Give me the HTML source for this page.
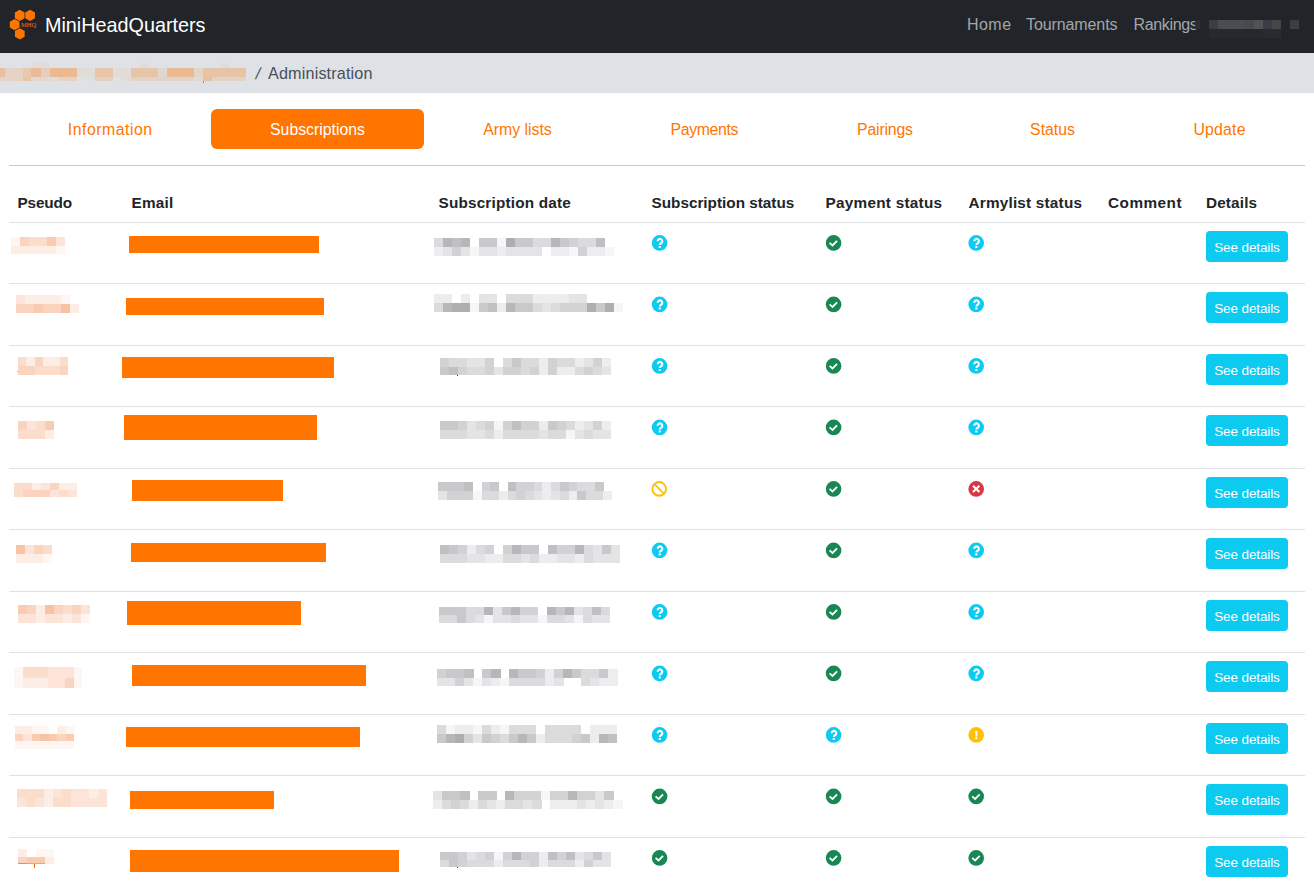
<!DOCTYPE html>
<html><head><meta charset="utf-8"><style>
*{box-sizing:border-box;margin:0;padding:0}
html,body{width:1314px;height:892px;overflow:hidden;background:#fff;font-family:"Liberation Sans",sans-serif;color:#212529;position:relative}
.nav{position:absolute;left:0;top:0;width:1314px;height:53px;background:#212529}
.logo{position:absolute;left:0;top:0}
.brand{position:absolute;left:45px;top:14px;font-size:19.8px;line-height:22px;color:#fff;white-space:nowrap}
.nl{position:absolute;top:15.8px;font-size:16px;line-height:18px;color:#a4a6a9;white-space:nowrap}
.crumb{position:absolute;left:0;top:53px;width:1314px;height:40px;background:#dee2e6}
.ct{position:absolute;top:64px;font-size:16.2px;line-height:18px;color:#495057;white-space:nowrap}
.tab{position:absolute;top:109px;height:39.5px;line-height:42.5px;text-align:center;font-size:15.8px;color:#ff7500;white-space:nowrap;border-radius:6px}
.tab.act{background:#ff7500;color:#fff}
.tl{position:absolute;left:9px;top:164.5px;width:1296px;height:1px;background:#c9cacc}
.th{position:absolute;top:194px;font-size:15.3px;line-height:18px;font-weight:bold;white-space:nowrap;color:#212529}
.hl{position:absolute;left:9px;width:1296px;height:1px;background:#dee2e6}
.em{position:absolute;background:#ff7500}
.bk{position:absolute}
.ic{position:absolute}
.btn{position:absolute;left:1206px;width:82px;height:31px;line-height:34.5px;background:#0dcaf0;color:#fff;border-radius:4px;text-align:center;font-size:13.5px;letter-spacing:-0.12px;text-indent:-0.12px;white-space:nowrap}
</style></head><body>
<div class="nav"><svg class="logo" width="45" height="53" viewBox="0 0 45 53"><polygon points="19.70,9.80 24.55,12.60 24.55,18.20 19.70,21.00 14.85,18.20 14.85,12.60" fill="#ff7500"/><polygon points="30.10,9.80 34.95,12.60 34.95,18.20 30.10,21.00 25.25,18.20 25.25,12.60" fill="#ff7500"/><polygon points="14.60,19.00 19.45,21.80 19.45,27.40 14.60,30.20 9.75,27.40 9.75,21.80" fill="#ff7500"/><polygon points="19.80,28.30 24.65,31.10 24.65,36.70 19.80,39.50 14.95,36.70 14.95,31.10" fill="#ff7500"/><text x="21" y="26.7" font-family="Liberation Serif" font-size="6.5" fill="#ff7500" textLength="15.2" lengthAdjust="spacingAndGlyphs">MHQ</text></svg><div class="brand">MiniHeadQuarters</div>
<div class="nl" style="left:967px;letter-spacing:0.45px">Home</div><div class="nl" style="left:1026px;letter-spacing:-0.1px">Tournaments</div><div class="nl" style="left:1133.5px;letter-spacing:-0.35px">Rankings</div>
<div class="bk" style="left:1195.2px;top:20px;width:4.9px;height:9px;background:#2d2e30"></div><div class="bk" style="left:1208.9px;top:20px;width:9.2px;height:9px;background:#3b3e45"></div><div class="bk" style="left:1217.8px;top:20px;width:9.2px;height:9px;background:#4b4e50"></div><div class="bk" style="left:1226.8px;top:20px;width:9.2px;height:9px;background:#4a4d4f"></div><div class="bk" style="left:1235.8px;top:20px;width:9.2px;height:9px;background:#4c4d51"></div><div class="bk" style="left:1244.7px;top:20px;width:9.6px;height:9px;background:#464c4b"></div><div class="bk" style="left:1254.2px;top:20px;width:9.2px;height:9px;background:#515457"></div><div class="bk" style="left:1263.1px;top:20px;width:9.2px;height:9px;background:#3b3e46"></div><div class="bk" style="left:1272.1px;top:20px;width:9.0px;height:9px;background:#454647"></div><div class="bk" style="left:1290.0px;top:20px;width:9.2px;height:9px;background:#3b3e42"></div><div class="bk" style="left:1208.9px;top:29px;width:36.0px;height:9px;background:#26292d"></div><div class="bk" style="left:1244.7px;top:29px;width:18.6px;height:9px;background:#25292c"></div><div class="bk" style="left:1263.1px;top:29px;width:17.9px;height:9px;background:#282b2f"></div>
</div>
<div class="crumb"></div>
<div class="bk" style="left:32.3px;top:63px;width:17.7px;height:5px;background:#e1dcd8"></div><div class="bk" style="left:140.4px;top:63px;width:8.2px;height:5px;background:#e0dcd9"></div><div class="bk" style="left:220.7px;top:63px;width:9.3px;height:5px;background:#e0dcd9"></div><div class="bk" style="left:0.0px;top:68px;width:5.0px;height:9px;background:#e8bfa0"></div><div class="bk" style="left:4.8px;top:68px;width:18.3px;height:9px;background:#e4d2c4"></div><div class="bk" style="left:22.8px;top:68px;width:8.8px;height:9px;background:#e6c9af"></div><div class="bk" style="left:31.4px;top:68px;width:9.7px;height:9px;background:#e9bb98"></div><div class="bk" style="left:40.9px;top:68px;width:9.1px;height:9px;background:#e4cfbe"></div><div class="bk" style="left:49.8px;top:68px;width:27.4px;height:9px;background:#ebb992"></div><div class="bk" style="left:77.1px;top:68px;width:18.3px;height:9px;background:#e0ddd9"></div><div class="bk" style="left:95.1px;top:68px;width:18.3px;height:9px;background:#e7c5a9"></div><div class="bk" style="left:113.2px;top:68px;width:18.3px;height:9px;background:#e0ddd9"></div><div class="bk" style="left:131.3px;top:68px;width:26.8px;height:9px;background:#e7c5a9"></div><div class="bk" style="left:157.9px;top:68px;width:8.8px;height:9px;background:#e0d8d0"></div><div class="bk" style="left:166.5px;top:68px;width:27.8px;height:9px;background:#ebb992"></div><div class="bk" style="left:194.1px;top:68px;width:8.8px;height:9px;background:#e4d4c6"></div><div class="bk" style="left:202.6px;top:68px;width:36.3px;height:9px;background:#e8c4a6"></div><div class="bk" style="left:238.8px;top:68px;width:7.4px;height:9px;background:#eac3a3"></div><div class="bk" style="left:0.0px;top:77px;width:31.6px;height:4px;background:#e5d3c3"></div><div class="bk" style="left:22.8px;top:77px;width:8.8px;height:4px;background:#e8c4a4"></div><div class="bk" style="left:31.4px;top:77px;width:18.7px;height:4px;background:#e2d8d0"></div><div class="bk" style="left:49.8px;top:77px;width:9.3px;height:4px;background:#e0dcd8"></div><div class="bk" style="left:59.0px;top:77px;width:18.3px;height:4px;background:#e5d2c2"></div><div class="bk" style="left:77.1px;top:77px;width:18.3px;height:4px;background:#dfe0e1"></div><div class="bk" style="left:95.1px;top:77px;width:18.3px;height:4px;background:#e6cfbc"></div><div class="bk" style="left:121.8px;top:77px;width:9.7px;height:4px;background:#e1dcd7"></div><div class="bk" style="left:131.3px;top:77px;width:63.0px;height:4px;background:#e4d3c5"></div><div class="bk" style="left:194.1px;top:77px;width:8.8px;height:4px;background:#e1dbd6"></div><div class="bk" style="left:202.6px;top:77px;width:9.7px;height:4px;background:#e9bf9e"></div><div class="bk" style="left:212.1px;top:77px;width:34.1px;height:4px;background:#e4d3c5"></div>
<div class="ct" style="left:254px;transform:skewX(-12deg);transform-origin:0 100%">/</div><div class="ct" style="left:268px;letter-spacing:0.15px">Administration</div>
<div class="tab" style="left:9px;width:202px;letter-spacing:0.53px;text-indent:0.53px">Information</div><div class="tab act" style="left:211px;width:213px;letter-spacing:0px;text-indent:0px">Subscriptions</div><div class="tab" style="left:424px;width:187px;letter-spacing:0px;text-indent:0px">Army lists</div><div class="tab" style="left:611px;width:187px;letter-spacing:-0.34px;text-indent:-0.34px">Payments</div><div class="tab" style="left:798px;width:174px;letter-spacing:-0.18px;text-indent:-0.18px">Pairings</div><div class="tab" style="left:972px;width:161px;letter-spacing:0px;text-indent:0px">Status</div><div class="tab" style="left:1134.5px;width:170px;letter-spacing:0.2px;text-indent:0.2px">Update</div>
<div class="tl"></div>
<div class="th" style="left:17.5px;letter-spacing:-0.15px">Pseudo</div>
<div class="th" style="left:131.5px;letter-spacing:0.25px">Email</div>
<div class="th" style="left:438.5px;letter-spacing:0.19px">Subscription date</div>
<div class="th" style="left:651.5px">Subscription status</div>
<div class="th" style="left:825.5px;letter-spacing:0.27px">Payment status</div>
<div class="th" style="left:968.5px;letter-spacing:0.21px">Armylist status</div>
<div class="th" style="left:1108px;letter-spacing:0.5px">Comment</div>
<div class="th" style="left:1206px;letter-spacing:0.15px">Details</div>
<div class="hl" style="top:222px"></div>
<div class="em" style="left:129px;top:236px;width:190px;height:17px"></div>
<div class="bk" style="left:11.00px;top:237.00px;width:9.25px;height:8.75px;background:rgb(254,246,242)"></div><div class="bk" style="left:20.00px;top:237.00px;width:9.25px;height:8.75px;background:rgb(250,212,190)"></div><div class="bk" style="left:29.00px;top:237.00px;width:9.25px;height:8.75px;background:rgb(251,221,203)"></div><div class="bk" style="left:38.00px;top:237.00px;width:9.25px;height:8.75px;background:rgb(251,221,203)"></div><div class="bk" style="left:47.00px;top:237.00px;width:9.25px;height:8.75px;background:rgb(249,204,177)"></div><div class="bk" style="left:56.00px;top:237.00px;width:9.25px;height:8.75px;background:rgb(252,229,216)"></div><div class="bk" style="left:11.00px;top:245.50px;width:9.25px;height:8.75px;background:rgb(253,238,229)"></div><div class="bk" style="left:20.00px;top:245.50px;width:9.25px;height:8.75px;background:rgb(253,238,229)"></div><div class="bk" style="left:29.00px;top:245.50px;width:9.25px;height:8.75px;background:rgb(253,238,229)"></div><div class="bk" style="left:38.00px;top:245.50px;width:9.25px;height:8.75px;background:rgb(253,238,229)"></div><div class="bk" style="left:47.00px;top:245.50px;width:9.25px;height:8.75px;background:rgb(253,238,229)"></div><div class="bk" style="left:56.00px;top:245.50px;width:9.25px;height:8.75px;background:rgb(254,246,242)"></div>
<div class="bk" style="left:434.00px;top:238.00px;width:9.25px;height:9.25px;background:rgb(219,219,221)"></div><div class="bk" style="left:443.00px;top:238.00px;width:9.25px;height:9.25px;background:rgb(183,183,185)"></div><div class="bk" style="left:452.00px;top:238.00px;width:9.25px;height:9.25px;background:rgb(192,192,194)"></div><div class="bk" style="left:461.00px;top:238.00px;width:9.25px;height:9.25px;background:rgb(183,183,185)"></div><div class="bk" style="left:479.00px;top:238.00px;width:9.25px;height:9.25px;background:rgb(201,201,203)"></div><div class="bk" style="left:488.00px;top:238.00px;width:9.25px;height:9.25px;background:rgb(201,201,203)"></div><div class="bk" style="left:497.00px;top:238.00px;width:9.25px;height:9.25px;background:rgb(246,246,248)"></div><div class="bk" style="left:506.00px;top:238.00px;width:9.25px;height:9.25px;background:rgb(174,174,176)"></div><div class="bk" style="left:515.00px;top:238.00px;width:9.25px;height:9.25px;background:rgb(201,201,203)"></div><div class="bk" style="left:524.00px;top:238.00px;width:9.25px;height:9.25px;background:rgb(201,201,203)"></div><div class="bk" style="left:533.00px;top:238.00px;width:9.25px;height:9.25px;background:rgb(219,219,221)"></div><div class="bk" style="left:542.00px;top:238.00px;width:9.25px;height:9.25px;background:rgb(219,219,221)"></div><div class="bk" style="left:551.00px;top:238.00px;width:9.25px;height:9.25px;background:rgb(183,183,185)"></div><div class="bk" style="left:560.00px;top:238.00px;width:9.25px;height:9.25px;background:rgb(201,201,203)"></div><div class="bk" style="left:569.00px;top:238.00px;width:9.25px;height:9.25px;background:rgb(210,210,212)"></div><div class="bk" style="left:578.00px;top:238.00px;width:9.25px;height:9.25px;background:rgb(219,219,221)"></div><div class="bk" style="left:587.00px;top:238.00px;width:9.25px;height:9.25px;background:rgb(219,219,221)"></div><div class="bk" style="left:596.00px;top:238.00px;width:9.25px;height:9.25px;background:rgb(192,192,194)"></div><div class="bk" style="left:434.00px;top:247.00px;width:9.25px;height:9.25px;background:rgb(237,237,239)"></div><div class="bk" style="left:443.00px;top:247.00px;width:9.25px;height:9.25px;background:rgb(228,228,230)"></div><div class="bk" style="left:452.00px;top:247.00px;width:9.25px;height:9.25px;background:rgb(210,210,212)"></div><div class="bk" style="left:461.00px;top:247.00px;width:9.25px;height:9.25px;background:rgb(228,228,230)"></div><div class="bk" style="left:470.00px;top:247.00px;width:9.25px;height:9.25px;background:rgb(246,246,248)"></div><div class="bk" style="left:479.00px;top:247.00px;width:9.25px;height:9.25px;background:rgb(228,228,230)"></div><div class="bk" style="left:488.00px;top:247.00px;width:9.25px;height:9.25px;background:rgb(228,228,230)"></div><div class="bk" style="left:497.00px;top:247.00px;width:9.25px;height:9.25px;background:rgb(237,237,239)"></div><div class="bk" style="left:506.00px;top:247.00px;width:9.25px;height:9.25px;background:rgb(228,228,230)"></div><div class="bk" style="left:515.00px;top:247.00px;width:9.25px;height:9.25px;background:rgb(228,228,230)"></div><div class="bk" style="left:524.00px;top:247.00px;width:9.25px;height:9.25px;background:rgb(228,228,230)"></div><div class="bk" style="left:533.00px;top:247.00px;width:9.25px;height:9.25px;background:rgb(228,228,230)"></div><div class="bk" style="left:551.00px;top:247.00px;width:9.25px;height:9.25px;background:rgb(237,237,239)"></div><div class="bk" style="left:560.00px;top:247.00px;width:9.25px;height:9.25px;background:rgb(237,237,239)"></div><div class="bk" style="left:569.00px;top:247.00px;width:9.25px;height:9.25px;background:rgb(246,246,248)"></div><div class="bk" style="left:578.00px;top:247.00px;width:9.25px;height:9.25px;background:rgb(210,210,212)"></div><div class="bk" style="left:587.00px;top:247.00px;width:9.25px;height:9.25px;background:rgb(237,237,239)"></div><div class="bk" style="left:596.00px;top:247.00px;width:9.25px;height:9.25px;background:rgb(237,237,239)"></div><div class="bk" style="left:605.00px;top:247.00px;width:9.25px;height:9.25px;background:rgb(246,246,248)"></div>
<div class="btn" style="top:231px">See details</div>
<div class="hl" style="top:283px"></div>
<div class="em" style="left:126px;top:298px;width:198px;height:17px"></div>
<div class="bk" style="left:16.00px;top:295.00px;width:9.25px;height:9.25px;background:rgb(252,229,216)"></div><div class="bk" style="left:25.00px;top:295.00px;width:9.25px;height:9.25px;background:rgb(253,238,229)"></div><div class="bk" style="left:34.00px;top:295.00px;width:9.25px;height:9.25px;background:rgb(253,238,229)"></div><div class="bk" style="left:43.00px;top:295.00px;width:9.25px;height:9.25px;background:rgb(253,238,229)"></div><div class="bk" style="left:52.00px;top:295.00px;width:9.25px;height:9.25px;background:rgb(253,238,229)"></div><div class="bk" style="left:61.00px;top:295.00px;width:9.25px;height:9.25px;background:rgb(254,246,242)"></div><div class="bk" style="left:16.00px;top:304.00px;width:9.25px;height:9.25px;background:rgb(250,212,190)"></div><div class="bk" style="left:25.00px;top:304.00px;width:9.25px;height:9.25px;background:rgb(250,212,190)"></div><div class="bk" style="left:34.00px;top:304.00px;width:9.25px;height:9.25px;background:rgb(249,204,177)"></div><div class="bk" style="left:43.00px;top:304.00px;width:9.25px;height:9.25px;background:rgb(250,212,190)"></div><div class="bk" style="left:52.00px;top:304.00px;width:9.25px;height:9.25px;background:rgb(250,212,190)"></div><div class="bk" style="left:61.00px;top:304.00px;width:9.25px;height:9.25px;background:rgb(248,195,164)"></div><div class="bk" style="left:70.00px;top:304.00px;width:9.25px;height:9.25px;background:rgb(253,238,229)"></div>
<div class="bk" style="left:434.00px;top:294.00px;width:9.25px;height:9.25px;background:rgb(237,237,239)"></div><div class="bk" style="left:443.00px;top:294.00px;width:9.25px;height:9.25px;background:rgb(237,237,239)"></div><div class="bk" style="left:461.00px;top:294.00px;width:9.25px;height:9.25px;background:rgb(237,237,239)"></div><div class="bk" style="left:479.00px;top:294.00px;width:9.25px;height:9.25px;background:rgb(228,228,230)"></div><div class="bk" style="left:488.00px;top:294.00px;width:9.25px;height:9.25px;background:rgb(228,228,230)"></div><div class="bk" style="left:506.00px;top:294.00px;width:9.25px;height:9.25px;background:rgb(219,219,221)"></div><div class="bk" style="left:515.00px;top:294.00px;width:9.25px;height:9.25px;background:rgb(219,219,221)"></div><div class="bk" style="left:524.00px;top:294.00px;width:9.25px;height:9.25px;background:rgb(219,219,221)"></div><div class="bk" style="left:533.00px;top:294.00px;width:9.25px;height:9.25px;background:rgb(237,237,239)"></div><div class="bk" style="left:542.00px;top:294.00px;width:9.25px;height:9.25px;background:rgb(237,237,239)"></div><div class="bk" style="left:551.00px;top:294.00px;width:9.25px;height:9.25px;background:rgb(237,237,239)"></div><div class="bk" style="left:560.00px;top:294.00px;width:9.25px;height:9.25px;background:rgb(237,237,239)"></div><div class="bk" style="left:569.00px;top:294.00px;width:9.25px;height:9.25px;background:rgb(228,228,230)"></div><div class="bk" style="left:578.00px;top:294.00px;width:9.25px;height:9.25px;background:rgb(228,228,230)"></div><div class="bk" style="left:434.00px;top:303.00px;width:9.25px;height:9.25px;background:rgb(219,219,221)"></div><div class="bk" style="left:443.00px;top:303.00px;width:9.25px;height:9.25px;background:rgb(183,183,185)"></div><div class="bk" style="left:452.00px;top:303.00px;width:9.25px;height:9.25px;background:rgb(174,174,176)"></div><div class="bk" style="left:461.00px;top:303.00px;width:9.25px;height:9.25px;background:rgb(174,174,176)"></div><div class="bk" style="left:470.00px;top:303.00px;width:9.25px;height:9.25px;background:rgb(246,246,248)"></div><div class="bk" style="left:479.00px;top:303.00px;width:9.25px;height:9.25px;background:rgb(201,201,203)"></div><div class="bk" style="left:488.00px;top:303.00px;width:9.25px;height:9.25px;background:rgb(192,192,194)"></div><div class="bk" style="left:497.00px;top:303.00px;width:9.25px;height:9.25px;background:rgb(237,237,239)"></div><div class="bk" style="left:506.00px;top:303.00px;width:9.25px;height:9.25px;background:rgb(183,183,185)"></div><div class="bk" style="left:515.00px;top:303.00px;width:9.25px;height:9.25px;background:rgb(201,201,203)"></div><div class="bk" style="left:524.00px;top:303.00px;width:9.25px;height:9.25px;background:rgb(201,201,203)"></div><div class="bk" style="left:533.00px;top:303.00px;width:9.25px;height:9.25px;background:rgb(219,219,221)"></div><div class="bk" style="left:542.00px;top:303.00px;width:9.25px;height:9.25px;background:rgb(228,228,230)"></div><div class="bk" style="left:551.00px;top:303.00px;width:9.25px;height:9.25px;background:rgb(219,219,221)"></div><div class="bk" style="left:560.00px;top:303.00px;width:9.25px;height:9.25px;background:rgb(210,210,212)"></div><div class="bk" style="left:569.00px;top:303.00px;width:9.25px;height:9.25px;background:rgb(210,210,212)"></div><div class="bk" style="left:578.00px;top:303.00px;width:9.25px;height:9.25px;background:rgb(210,210,212)"></div><div class="bk" style="left:587.00px;top:303.00px;width:9.25px;height:9.25px;background:rgb(174,174,176)"></div><div class="bk" style="left:596.00px;top:303.00px;width:9.25px;height:9.25px;background:rgb(201,201,203)"></div><div class="bk" style="left:605.00px;top:303.00px;width:9.25px;height:9.25px;background:rgb(174,174,176)"></div><div class="bk" style="left:614.00px;top:303.00px;width:9.25px;height:9.25px;background:rgb(246,246,248)"></div>
<div class="btn" style="top:292px">See details</div>
<div class="hl" style="top:345px"></div>
<div class="em" style="left:122px;top:357px;width:212px;height:21px"></div>
<div class="bk" style="left:18.00px;top:357.00px;width:8.58px;height:9.25px;background:rgb(251,221,203)"></div><div class="bk" style="left:26.33px;top:357.00px;width:8.58px;height:9.25px;background:rgb(253,238,229)"></div><div class="bk" style="left:34.67px;top:357.00px;width:8.58px;height:9.25px;background:rgb(250,212,190)"></div><div class="bk" style="left:43.00px;top:357.00px;width:8.58px;height:9.25px;background:rgb(253,238,229)"></div><div class="bk" style="left:51.33px;top:357.00px;width:8.58px;height:9.25px;background:rgb(253,238,229)"></div><div class="bk" style="left:59.67px;top:357.00px;width:8.58px;height:9.25px;background:rgb(251,221,203)"></div><div class="bk" style="left:18.00px;top:366.00px;width:8.58px;height:9.25px;background:rgb(250,212,190)"></div><div class="bk" style="left:26.33px;top:366.00px;width:8.58px;height:9.25px;background:rgb(250,212,190)"></div><div class="bk" style="left:34.67px;top:366.00px;width:8.58px;height:9.25px;background:rgb(251,221,203)"></div><div class="bk" style="left:43.00px;top:366.00px;width:8.58px;height:9.25px;background:rgb(251,221,203)"></div><div class="bk" style="left:51.33px;top:366.00px;width:8.58px;height:9.25px;background:rgb(251,221,203)"></div><div class="bk" style="left:59.67px;top:366.00px;width:8.58px;height:9.25px;background:rgb(250,212,190)"></div>
<div class="bk" style="left:440.00px;top:358.00px;width:9.25px;height:8.75px;background:rgb(210,210,212)"></div><div class="bk" style="left:449.00px;top:358.00px;width:9.25px;height:8.75px;background:rgb(219,219,221)"></div><div class="bk" style="left:458.00px;top:358.00px;width:9.25px;height:8.75px;background:rgb(219,219,221)"></div><div class="bk" style="left:467.00px;top:358.00px;width:9.25px;height:8.75px;background:rgb(228,228,230)"></div><div class="bk" style="left:476.00px;top:358.00px;width:9.25px;height:8.75px;background:rgb(228,228,230)"></div><div class="bk" style="left:485.00px;top:358.00px;width:9.25px;height:8.75px;background:rgb(210,210,212)"></div><div class="bk" style="left:503.00px;top:358.00px;width:9.25px;height:8.75px;background:rgb(219,219,221)"></div><div class="bk" style="left:512.00px;top:358.00px;width:9.25px;height:8.75px;background:rgb(201,201,203)"></div><div class="bk" style="left:521.00px;top:358.00px;width:9.25px;height:8.75px;background:rgb(219,219,221)"></div><div class="bk" style="left:530.00px;top:358.00px;width:9.25px;height:8.75px;background:rgb(219,219,221)"></div><div class="bk" style="left:539.00px;top:358.00px;width:9.25px;height:8.75px;background:rgb(237,237,239)"></div><div class="bk" style="left:548.00px;top:358.00px;width:9.25px;height:8.75px;background:rgb(210,210,212)"></div><div class="bk" style="left:557.00px;top:358.00px;width:9.25px;height:8.75px;background:rgb(219,219,221)"></div><div class="bk" style="left:566.00px;top:358.00px;width:9.25px;height:8.75px;background:rgb(219,219,221)"></div><div class="bk" style="left:575.00px;top:358.00px;width:9.25px;height:8.75px;background:rgb(237,237,239)"></div><div class="bk" style="left:584.00px;top:358.00px;width:9.25px;height:8.75px;background:rgb(228,228,230)"></div><div class="bk" style="left:593.00px;top:358.00px;width:9.25px;height:8.75px;background:rgb(210,210,212)"></div><div class="bk" style="left:602.00px;top:358.00px;width:9.25px;height:8.75px;background:rgb(237,237,239)"></div><div class="bk" style="left:440.00px;top:366.50px;width:9.25px;height:8.75px;background:rgb(201,201,203)"></div><div class="bk" style="left:449.00px;top:366.50px;width:9.25px;height:8.75px;background:rgb(192,192,194)"></div><div class="bk" style="left:458.00px;top:366.50px;width:9.25px;height:8.75px;background:rgb(210,210,212)"></div><div class="bk" style="left:467.00px;top:366.50px;width:9.25px;height:8.75px;background:rgb(219,219,221)"></div><div class="bk" style="left:476.00px;top:366.50px;width:9.25px;height:8.75px;background:rgb(219,219,221)"></div><div class="bk" style="left:485.00px;top:366.50px;width:9.25px;height:8.75px;background:rgb(210,210,212)"></div><div class="bk" style="left:494.00px;top:366.50px;width:9.25px;height:8.75px;background:rgb(228,228,230)"></div><div class="bk" style="left:503.00px;top:366.50px;width:9.25px;height:8.75px;background:rgb(210,210,212)"></div><div class="bk" style="left:512.00px;top:366.50px;width:9.25px;height:8.75px;background:rgb(210,210,212)"></div><div class="bk" style="left:521.00px;top:366.50px;width:9.25px;height:8.75px;background:rgb(219,219,221)"></div><div class="bk" style="left:530.00px;top:366.50px;width:9.25px;height:8.75px;background:rgb(210,210,212)"></div><div class="bk" style="left:539.00px;top:366.50px;width:9.25px;height:8.75px;background:rgb(237,237,239)"></div><div class="bk" style="left:548.00px;top:366.50px;width:9.25px;height:8.75px;background:rgb(210,210,212)"></div><div class="bk" style="left:557.00px;top:366.50px;width:9.25px;height:8.75px;background:rgb(237,237,239)"></div><div class="bk" style="left:566.00px;top:366.50px;width:9.25px;height:8.75px;background:rgb(237,237,239)"></div><div class="bk" style="left:575.00px;top:366.50px;width:9.25px;height:8.75px;background:rgb(219,219,221)"></div><div class="bk" style="left:584.00px;top:366.50px;width:9.25px;height:8.75px;background:rgb(210,210,212)"></div><div class="bk" style="left:593.00px;top:366.50px;width:9.25px;height:8.75px;background:rgb(219,219,221)"></div><div class="bk" style="left:602.00px;top:366.50px;width:9.25px;height:8.75px;background:rgb(228,228,230)"></div>
<div class="btn" style="top:354px">See details</div>
<div class="hl" style="top:406px"></div>
<div class="em" style="left:124px;top:415px;width:193px;height:25px"></div>
<div class="bk" style="left:18.00px;top:421.00px;width:9.25px;height:9.25px;background:rgb(250,212,190)"></div><div class="bk" style="left:27.00px;top:421.00px;width:9.25px;height:9.25px;background:rgb(252,229,216)"></div><div class="bk" style="left:36.00px;top:421.00px;width:9.25px;height:9.25px;background:rgb(251,221,203)"></div><div class="bk" style="left:45.00px;top:421.00px;width:9.25px;height:9.25px;background:rgb(249,204,177)"></div><div class="bk" style="left:18.00px;top:430.00px;width:9.25px;height:9.25px;background:rgb(251,221,203)"></div><div class="bk" style="left:27.00px;top:430.00px;width:9.25px;height:9.25px;background:rgb(251,221,203)"></div><div class="bk" style="left:36.00px;top:430.00px;width:9.25px;height:9.25px;background:rgb(251,221,203)"></div><div class="bk" style="left:45.00px;top:430.00px;width:9.25px;height:9.25px;background:rgb(253,238,229)"></div>
<div class="bk" style="left:440.00px;top:421.00px;width:9.25px;height:9.25px;background:rgb(201,201,203)"></div><div class="bk" style="left:449.00px;top:421.00px;width:9.25px;height:9.25px;background:rgb(201,201,203)"></div><div class="bk" style="left:458.00px;top:421.00px;width:9.25px;height:9.25px;background:rgb(210,210,212)"></div><div class="bk" style="left:467.00px;top:421.00px;width:9.25px;height:9.25px;background:rgb(228,228,230)"></div><div class="bk" style="left:476.00px;top:421.00px;width:9.25px;height:9.25px;background:rgb(219,219,221)"></div><div class="bk" style="left:485.00px;top:421.00px;width:9.25px;height:9.25px;background:rgb(210,210,212)"></div><div class="bk" style="left:494.00px;top:421.00px;width:9.25px;height:9.25px;background:rgb(246,246,248)"></div><div class="bk" style="left:503.00px;top:421.00px;width:9.25px;height:9.25px;background:rgb(210,210,212)"></div><div class="bk" style="left:512.00px;top:421.00px;width:9.25px;height:9.25px;background:rgb(192,192,194)"></div><div class="bk" style="left:521.00px;top:421.00px;width:9.25px;height:9.25px;background:rgb(210,210,212)"></div><div class="bk" style="left:530.00px;top:421.00px;width:9.25px;height:9.25px;background:rgb(210,210,212)"></div><div class="bk" style="left:539.00px;top:421.00px;width:9.25px;height:9.25px;background:rgb(237,237,239)"></div><div class="bk" style="left:548.00px;top:421.00px;width:9.25px;height:9.25px;background:rgb(201,201,203)"></div><div class="bk" style="left:557.00px;top:421.00px;width:9.25px;height:9.25px;background:rgb(210,210,212)"></div><div class="bk" style="left:566.00px;top:421.00px;width:9.25px;height:9.25px;background:rgb(219,219,221)"></div><div class="bk" style="left:575.00px;top:421.00px;width:9.25px;height:9.25px;background:rgb(237,237,239)"></div><div class="bk" style="left:584.00px;top:421.00px;width:9.25px;height:9.25px;background:rgb(228,228,230)"></div><div class="bk" style="left:593.00px;top:421.00px;width:9.25px;height:9.25px;background:rgb(210,210,212)"></div><div class="bk" style="left:602.00px;top:421.00px;width:9.25px;height:9.25px;background:rgb(237,237,239)"></div><div class="bk" style="left:440.00px;top:430.00px;width:9.25px;height:9.25px;background:rgb(219,219,221)"></div><div class="bk" style="left:449.00px;top:430.00px;width:9.25px;height:9.25px;background:rgb(219,219,221)"></div><div class="bk" style="left:458.00px;top:430.00px;width:9.25px;height:9.25px;background:rgb(219,219,221)"></div><div class="bk" style="left:467.00px;top:430.00px;width:9.25px;height:9.25px;background:rgb(228,228,230)"></div><div class="bk" style="left:476.00px;top:430.00px;width:9.25px;height:9.25px;background:rgb(228,228,230)"></div><div class="bk" style="left:485.00px;top:430.00px;width:9.25px;height:9.25px;background:rgb(219,219,221)"></div><div class="bk" style="left:494.00px;top:430.00px;width:9.25px;height:9.25px;background:rgb(237,237,239)"></div><div class="bk" style="left:503.00px;top:430.00px;width:9.25px;height:9.25px;background:rgb(219,219,221)"></div><div class="bk" style="left:512.00px;top:430.00px;width:9.25px;height:9.25px;background:rgb(219,219,221)"></div><div class="bk" style="left:521.00px;top:430.00px;width:9.25px;height:9.25px;background:rgb(219,219,221)"></div><div class="bk" style="left:530.00px;top:430.00px;width:9.25px;height:9.25px;background:rgb(219,219,221)"></div><div class="bk" style="left:539.00px;top:430.00px;width:9.25px;height:9.25px;background:rgb(228,228,230)"></div><div class="bk" style="left:548.00px;top:430.00px;width:9.25px;height:9.25px;background:rgb(219,219,221)"></div><div class="bk" style="left:557.00px;top:430.00px;width:9.25px;height:9.25px;background:rgb(219,219,221)"></div><div class="bk" style="left:566.00px;top:430.00px;width:9.25px;height:9.25px;background:rgb(246,246,248)"></div><div class="bk" style="left:575.00px;top:430.00px;width:9.25px;height:9.25px;background:rgb(228,228,230)"></div><div class="bk" style="left:584.00px;top:430.00px;width:9.25px;height:9.25px;background:rgb(219,219,221)"></div><div class="bk" style="left:593.00px;top:430.00px;width:9.25px;height:9.25px;background:rgb(228,228,230)"></div><div class="bk" style="left:602.00px;top:430.00px;width:9.25px;height:9.25px;background:rgb(228,228,230)"></div>
<div class="btn" style="top:415px">See details</div>
<div class="hl" style="top:468px"></div>
<div class="em" style="left:132px;top:480px;width:151px;height:21px"></div>
<div class="bk" style="left:14.00px;top:483.00px;width:9.25px;height:7.25px;background:rgb(251,221,203)"></div><div class="bk" style="left:23.00px;top:483.00px;width:9.25px;height:7.25px;background:rgb(251,221,203)"></div><div class="bk" style="left:32.00px;top:483.00px;width:9.25px;height:7.25px;background:rgb(253,238,229)"></div><div class="bk" style="left:41.00px;top:483.00px;width:9.25px;height:7.25px;background:rgb(252,229,216)"></div><div class="bk" style="left:50.00px;top:483.00px;width:9.25px;height:7.25px;background:rgb(250,212,190)"></div><div class="bk" style="left:59.00px;top:483.00px;width:9.25px;height:7.25px;background:rgb(253,238,229)"></div><div class="bk" style="left:68.00px;top:483.00px;width:9.25px;height:7.25px;background:rgb(253,238,229)"></div><div class="bk" style="left:14.00px;top:490.00px;width:9.25px;height:7.25px;background:rgb(251,221,203)"></div><div class="bk" style="left:23.00px;top:490.00px;width:9.25px;height:7.25px;background:rgb(250,212,190)"></div><div class="bk" style="left:32.00px;top:490.00px;width:9.25px;height:7.25px;background:rgb(250,212,190)"></div><div class="bk" style="left:41.00px;top:490.00px;width:9.25px;height:7.25px;background:rgb(250,212,190)"></div><div class="bk" style="left:50.00px;top:490.00px;width:9.25px;height:7.25px;background:rgb(252,229,216)"></div><div class="bk" style="left:59.00px;top:490.00px;width:9.25px;height:7.25px;background:rgb(251,221,203)"></div><div class="bk" style="left:68.00px;top:490.00px;width:9.25px;height:7.25px;background:rgb(252,229,216)"></div>
<div class="bk" style="left:438.00px;top:482.00px;width:8.95px;height:9.25px;background:rgb(201,201,203)"></div><div class="bk" style="left:446.70px;top:482.00px;width:8.95px;height:9.25px;background:rgb(201,201,203)"></div><div class="bk" style="left:455.40px;top:482.00px;width:8.95px;height:9.25px;background:rgb(201,201,203)"></div><div class="bk" style="left:464.10px;top:482.00px;width:8.95px;height:9.25px;background:rgb(192,192,194)"></div><div class="bk" style="left:481.50px;top:482.00px;width:8.95px;height:9.25px;background:rgb(210,210,212)"></div><div class="bk" style="left:490.20px;top:482.00px;width:8.95px;height:9.25px;background:rgb(201,201,203)"></div><div class="bk" style="left:507.60px;top:482.00px;width:8.95px;height:9.25px;background:rgb(192,192,194)"></div><div class="bk" style="left:516.30px;top:482.00px;width:8.95px;height:9.25px;background:rgb(210,210,212)"></div><div class="bk" style="left:525.00px;top:482.00px;width:8.95px;height:9.25px;background:rgb(210,210,212)"></div><div class="bk" style="left:533.70px;top:482.00px;width:8.95px;height:9.25px;background:rgb(219,219,221)"></div><div class="bk" style="left:542.40px;top:482.00px;width:8.95px;height:9.25px;background:rgb(237,237,239)"></div><div class="bk" style="left:551.10px;top:482.00px;width:8.95px;height:9.25px;background:rgb(219,219,221)"></div><div class="bk" style="left:559.80px;top:482.00px;width:8.95px;height:9.25px;background:rgb(201,201,203)"></div><div class="bk" style="left:568.50px;top:482.00px;width:8.95px;height:9.25px;background:rgb(210,210,212)"></div><div class="bk" style="left:577.20px;top:482.00px;width:8.95px;height:9.25px;background:rgb(219,219,221)"></div><div class="bk" style="left:585.90px;top:482.00px;width:8.95px;height:9.25px;background:rgb(219,219,221)"></div><div class="bk" style="left:594.60px;top:482.00px;width:8.95px;height:9.25px;background:rgb(201,201,203)"></div><div class="bk" style="left:438.00px;top:491.00px;width:8.95px;height:9.25px;background:rgb(228,228,230)"></div><div class="bk" style="left:446.70px;top:491.00px;width:8.95px;height:9.25px;background:rgb(210,210,212)"></div><div class="bk" style="left:455.40px;top:491.00px;width:8.95px;height:9.25px;background:rgb(210,210,212)"></div><div class="bk" style="left:464.10px;top:491.00px;width:8.95px;height:9.25px;background:rgb(210,210,212)"></div><div class="bk" style="left:472.80px;top:491.00px;width:8.95px;height:9.25px;background:rgb(246,246,248)"></div><div class="bk" style="left:481.50px;top:491.00px;width:8.95px;height:9.25px;background:rgb(219,219,221)"></div><div class="bk" style="left:490.20px;top:491.00px;width:8.95px;height:9.25px;background:rgb(219,219,221)"></div><div class="bk" style="left:498.90px;top:491.00px;width:8.95px;height:9.25px;background:rgb(237,237,239)"></div><div class="bk" style="left:507.60px;top:491.00px;width:8.95px;height:9.25px;background:rgb(219,219,221)"></div><div class="bk" style="left:516.30px;top:491.00px;width:8.95px;height:9.25px;background:rgb(210,210,212)"></div><div class="bk" style="left:525.00px;top:491.00px;width:8.95px;height:9.25px;background:rgb(219,219,221)"></div><div class="bk" style="left:533.70px;top:491.00px;width:8.95px;height:9.25px;background:rgb(228,228,230)"></div><div class="bk" style="left:542.40px;top:491.00px;width:8.95px;height:9.25px;background:rgb(237,237,239)"></div><div class="bk" style="left:551.10px;top:491.00px;width:8.95px;height:9.25px;background:rgb(228,228,230)"></div><div class="bk" style="left:559.80px;top:491.00px;width:8.95px;height:9.25px;background:rgb(219,219,221)"></div><div class="bk" style="left:568.50px;top:491.00px;width:8.95px;height:9.25px;background:rgb(237,237,239)"></div><div class="bk" style="left:577.20px;top:491.00px;width:8.95px;height:9.25px;background:rgb(201,201,203)"></div><div class="bk" style="left:585.90px;top:491.00px;width:8.95px;height:9.25px;background:rgb(219,219,221)"></div><div class="bk" style="left:594.60px;top:491.00px;width:8.95px;height:9.25px;background:rgb(219,219,221)"></div><div class="bk" style="left:603.30px;top:491.00px;width:8.95px;height:9.25px;background:rgb(237,237,239)"></div>
<div class="btn" style="top:477px">See details</div>
<div class="hl" style="top:529px"></div>
<div class="em" style="left:131px;top:543px;width:195px;height:19px"></div>
<div class="bk" style="left:16.00px;top:545.00px;width:9.25px;height:9.25px;background:rgb(248,195,164)"></div><div class="bk" style="left:25.00px;top:545.00px;width:9.25px;height:9.25px;background:rgb(252,229,216)"></div><div class="bk" style="left:34.00px;top:545.00px;width:9.25px;height:9.25px;background:rgb(250,212,190)"></div><div class="bk" style="left:43.00px;top:545.00px;width:9.25px;height:9.25px;background:rgb(251,221,203)"></div><div class="bk" style="left:16.00px;top:554.00px;width:9.25px;height:9.25px;background:rgb(253,238,229)"></div><div class="bk" style="left:25.00px;top:554.00px;width:9.25px;height:9.25px;background:rgb(253,238,229)"></div><div class="bk" style="left:34.00px;top:554.00px;width:9.25px;height:9.25px;background:rgb(253,238,229)"></div><div class="bk" style="left:43.00px;top:554.00px;width:9.25px;height:9.25px;background:rgb(254,246,242)"></div>
<div class="bk" style="left:440.00px;top:545.00px;width:9.25px;height:9.25px;background:rgb(192,192,194)"></div><div class="bk" style="left:449.00px;top:545.00px;width:9.25px;height:9.25px;background:rgb(201,201,203)"></div><div class="bk" style="left:458.00px;top:545.00px;width:9.25px;height:9.25px;background:rgb(210,210,212)"></div><div class="bk" style="left:467.00px;top:545.00px;width:9.25px;height:9.25px;background:rgb(237,237,239)"></div><div class="bk" style="left:476.00px;top:545.00px;width:9.25px;height:9.25px;background:rgb(219,219,221)"></div><div class="bk" style="left:485.00px;top:545.00px;width:9.25px;height:9.25px;background:rgb(210,210,212)"></div><div class="bk" style="left:503.00px;top:545.00px;width:9.25px;height:9.25px;background:rgb(210,210,212)"></div><div class="bk" style="left:512.00px;top:545.00px;width:9.25px;height:9.25px;background:rgb(183,183,185)"></div><div class="bk" style="left:521.00px;top:545.00px;width:9.25px;height:9.25px;background:rgb(201,201,203)"></div><div class="bk" style="left:530.00px;top:545.00px;width:9.25px;height:9.25px;background:rgb(201,201,203)"></div><div class="bk" style="left:548.00px;top:545.00px;width:9.25px;height:9.25px;background:rgb(192,192,194)"></div><div class="bk" style="left:557.00px;top:545.00px;width:9.25px;height:9.25px;background:rgb(210,210,212)"></div><div class="bk" style="left:566.00px;top:545.00px;width:9.25px;height:9.25px;background:rgb(210,210,212)"></div><div class="bk" style="left:575.00px;top:545.00px;width:9.25px;height:9.25px;background:rgb(183,183,185)"></div><div class="bk" style="left:584.00px;top:545.00px;width:9.25px;height:9.25px;background:rgb(219,219,221)"></div><div class="bk" style="left:593.00px;top:545.00px;width:9.25px;height:9.25px;background:rgb(228,228,230)"></div><div class="bk" style="left:602.00px;top:545.00px;width:9.25px;height:9.25px;background:rgb(201,201,203)"></div><div class="bk" style="left:611.00px;top:545.00px;width:9.25px;height:9.25px;background:rgb(228,228,230)"></div><div class="bk" style="left:440.00px;top:554.00px;width:9.25px;height:9.25px;background:rgb(219,219,221)"></div><div class="bk" style="left:449.00px;top:554.00px;width:9.25px;height:9.25px;background:rgb(219,219,221)"></div><div class="bk" style="left:458.00px;top:554.00px;width:9.25px;height:9.25px;background:rgb(219,219,221)"></div><div class="bk" style="left:467.00px;top:554.00px;width:9.25px;height:9.25px;background:rgb(228,228,230)"></div><div class="bk" style="left:476.00px;top:554.00px;width:9.25px;height:9.25px;background:rgb(228,228,230)"></div><div class="bk" style="left:485.00px;top:554.00px;width:9.25px;height:9.25px;background:rgb(237,237,239)"></div><div class="bk" style="left:494.00px;top:554.00px;width:9.25px;height:9.25px;background:rgb(237,237,239)"></div><div class="bk" style="left:503.00px;top:554.00px;width:9.25px;height:9.25px;background:rgb(219,219,221)"></div><div class="bk" style="left:512.00px;top:554.00px;width:9.25px;height:9.25px;background:rgb(219,219,221)"></div><div class="bk" style="left:521.00px;top:554.00px;width:9.25px;height:9.25px;background:rgb(228,228,230)"></div><div class="bk" style="left:530.00px;top:554.00px;width:9.25px;height:9.25px;background:rgb(219,219,221)"></div><div class="bk" style="left:539.00px;top:554.00px;width:9.25px;height:9.25px;background:rgb(237,237,239)"></div><div class="bk" style="left:548.00px;top:554.00px;width:9.25px;height:9.25px;background:rgb(237,237,239)"></div><div class="bk" style="left:557.00px;top:554.00px;width:9.25px;height:9.25px;background:rgb(228,228,230)"></div><div class="bk" style="left:566.00px;top:554.00px;width:9.25px;height:9.25px;background:rgb(228,228,230)"></div><div class="bk" style="left:575.00px;top:554.00px;width:9.25px;height:9.25px;background:rgb(237,237,239)"></div><div class="bk" style="left:584.00px;top:554.00px;width:9.25px;height:9.25px;background:rgb(219,219,221)"></div><div class="bk" style="left:593.00px;top:554.00px;width:9.25px;height:9.25px;background:rgb(228,228,230)"></div><div class="bk" style="left:602.00px;top:554.00px;width:9.25px;height:9.25px;background:rgb(228,228,230)"></div><div class="bk" style="left:611.00px;top:554.00px;width:9.25px;height:9.25px;background:rgb(228,228,230)"></div>
<div class="btn" style="top:538px">See details</div>
<div class="hl" style="top:591px"></div>
<div class="em" style="left:127px;top:601px;width:174px;height:24px"></div>
<div class="bk" style="left:18.00px;top:605.00px;width:9.25px;height:9.25px;background:rgb(249,204,177)"></div><div class="bk" style="left:27.00px;top:605.00px;width:9.25px;height:9.25px;background:rgb(250,212,190)"></div><div class="bk" style="left:36.00px;top:605.00px;width:9.25px;height:9.25px;background:rgb(253,238,229)"></div><div class="bk" style="left:45.00px;top:605.00px;width:9.25px;height:9.25px;background:rgb(248,195,164)"></div><div class="bk" style="left:54.00px;top:605.00px;width:9.25px;height:9.25px;background:rgb(250,212,190)"></div><div class="bk" style="left:63.00px;top:605.00px;width:9.25px;height:9.25px;background:rgb(251,221,203)"></div><div class="bk" style="left:72.00px;top:605.00px;width:9.25px;height:9.25px;background:rgb(250,212,190)"></div><div class="bk" style="left:81.00px;top:605.00px;width:9.25px;height:9.25px;background:rgb(252,229,216)"></div><div class="bk" style="left:18.00px;top:614.00px;width:9.25px;height:9.25px;background:rgb(252,229,216)"></div><div class="bk" style="left:27.00px;top:614.00px;width:9.25px;height:9.25px;background:rgb(252,229,216)"></div><div class="bk" style="left:36.00px;top:614.00px;width:9.25px;height:9.25px;background:rgb(253,238,229)"></div><div class="bk" style="left:45.00px;top:614.00px;width:9.25px;height:9.25px;background:rgb(252,229,216)"></div><div class="bk" style="left:54.00px;top:614.00px;width:9.25px;height:9.25px;background:rgb(252,229,216)"></div><div class="bk" style="left:63.00px;top:614.00px;width:9.25px;height:9.25px;background:rgb(253,238,229)"></div><div class="bk" style="left:72.00px;top:614.00px;width:9.25px;height:9.25px;background:rgb(252,229,216)"></div><div class="bk" style="left:81.00px;top:614.00px;width:9.25px;height:9.25px;background:rgb(254,246,242)"></div>
<div class="bk" style="left:439.00px;top:607.00px;width:9.25px;height:8.25px;background:rgb(201,201,203)"></div><div class="bk" style="left:448.00px;top:607.00px;width:9.25px;height:8.25px;background:rgb(201,201,203)"></div><div class="bk" style="left:457.00px;top:607.00px;width:9.25px;height:8.25px;background:rgb(201,201,203)"></div><div class="bk" style="left:466.00px;top:607.00px;width:9.25px;height:8.25px;background:rgb(219,219,221)"></div><div class="bk" style="left:475.00px;top:607.00px;width:9.25px;height:8.25px;background:rgb(219,219,221)"></div><div class="bk" style="left:484.00px;top:607.00px;width:9.25px;height:8.25px;background:rgb(183,183,185)"></div><div class="bk" style="left:493.00px;top:607.00px;width:9.25px;height:8.25px;background:rgb(228,228,230)"></div><div class="bk" style="left:502.00px;top:607.00px;width:9.25px;height:8.25px;background:rgb(201,201,203)"></div><div class="bk" style="left:511.00px;top:607.00px;width:9.25px;height:8.25px;background:rgb(183,183,185)"></div><div class="bk" style="left:520.00px;top:607.00px;width:9.25px;height:8.25px;background:rgb(210,210,212)"></div><div class="bk" style="left:529.00px;top:607.00px;width:9.25px;height:8.25px;background:rgb(210,210,212)"></div><div class="bk" style="left:547.00px;top:607.00px;width:9.25px;height:8.25px;background:rgb(183,183,185)"></div><div class="bk" style="left:556.00px;top:607.00px;width:9.25px;height:8.25px;background:rgb(201,201,203)"></div><div class="bk" style="left:565.00px;top:607.00px;width:9.25px;height:8.25px;background:rgb(183,183,185)"></div><div class="bk" style="left:574.00px;top:607.00px;width:9.25px;height:8.25px;background:rgb(228,228,230)"></div><div class="bk" style="left:583.00px;top:607.00px;width:9.25px;height:8.25px;background:rgb(219,219,221)"></div><div class="bk" style="left:592.00px;top:607.00px;width:9.25px;height:8.25px;background:rgb(192,192,194)"></div><div class="bk" style="left:601.00px;top:607.00px;width:9.25px;height:8.25px;background:rgb(219,219,221)"></div><div class="bk" style="left:439.00px;top:615.00px;width:9.25px;height:8.25px;background:rgb(219,219,221)"></div><div class="bk" style="left:448.00px;top:615.00px;width:9.25px;height:8.25px;background:rgb(219,219,221)"></div><div class="bk" style="left:457.00px;top:615.00px;width:9.25px;height:8.25px;background:rgb(201,201,203)"></div><div class="bk" style="left:466.00px;top:615.00px;width:9.25px;height:8.25px;background:rgb(219,219,221)"></div><div class="bk" style="left:475.00px;top:615.00px;width:9.25px;height:8.25px;background:rgb(228,228,230)"></div><div class="bk" style="left:484.00px;top:615.00px;width:9.25px;height:8.25px;background:rgb(246,246,248)"></div><div class="bk" style="left:493.00px;top:615.00px;width:9.25px;height:8.25px;background:rgb(228,228,230)"></div><div class="bk" style="left:502.00px;top:615.00px;width:9.25px;height:8.25px;background:rgb(228,228,230)"></div><div class="bk" style="left:511.00px;top:615.00px;width:9.25px;height:8.25px;background:rgb(219,219,221)"></div><div class="bk" style="left:520.00px;top:615.00px;width:9.25px;height:8.25px;background:rgb(228,228,230)"></div><div class="bk" style="left:529.00px;top:615.00px;width:9.25px;height:8.25px;background:rgb(228,228,230)"></div><div class="bk" style="left:538.00px;top:615.00px;width:9.25px;height:8.25px;background:rgb(246,246,248)"></div><div class="bk" style="left:547.00px;top:615.00px;width:9.25px;height:8.25px;background:rgb(219,219,221)"></div><div class="bk" style="left:556.00px;top:615.00px;width:9.25px;height:8.25px;background:rgb(219,219,221)"></div><div class="bk" style="left:565.00px;top:615.00px;width:9.25px;height:8.25px;background:rgb(228,228,230)"></div><div class="bk" style="left:574.00px;top:615.00px;width:9.25px;height:8.25px;background:rgb(246,246,248)"></div><div class="bk" style="left:583.00px;top:615.00px;width:9.25px;height:8.25px;background:rgb(219,219,221)"></div><div class="bk" style="left:592.00px;top:615.00px;width:9.25px;height:8.25px;background:rgb(228,228,230)"></div><div class="bk" style="left:601.00px;top:615.00px;width:9.25px;height:8.25px;background:rgb(228,228,230)"></div>
<div class="btn" style="top:600px">See details</div>
<div class="hl" style="top:652px"></div>
<div class="em" style="left:132px;top:665px;width:234px;height:21px"></div>
<div class="bk" style="left:14.00px;top:667.00px;width:8.75px;height:10.75px;background:rgb(254,246,242)"></div><div class="bk" style="left:22.50px;top:667.00px;width:8.75px;height:10.75px;background:rgb(251,221,203)"></div><div class="bk" style="left:31.00px;top:667.00px;width:8.75px;height:10.75px;background:rgb(251,221,203)"></div><div class="bk" style="left:39.50px;top:667.00px;width:8.75px;height:10.75px;background:rgb(251,221,203)"></div><div class="bk" style="left:48.00px;top:667.00px;width:8.75px;height:10.75px;background:rgb(252,229,216)"></div><div class="bk" style="left:56.50px;top:667.00px;width:8.75px;height:10.75px;background:rgb(252,229,216)"></div><div class="bk" style="left:65.00px;top:667.00px;width:8.75px;height:10.75px;background:rgb(252,229,216)"></div><div class="bk" style="left:73.50px;top:667.00px;width:8.75px;height:10.75px;background:rgb(254,246,242)"></div><div class="bk" style="left:14.00px;top:677.50px;width:8.75px;height:10.75px;background:rgb(254,246,242)"></div><div class="bk" style="left:22.50px;top:677.50px;width:8.75px;height:10.75px;background:rgb(253,238,229)"></div><div class="bk" style="left:31.00px;top:677.50px;width:8.75px;height:10.75px;background:rgb(253,238,229)"></div><div class="bk" style="left:39.50px;top:677.50px;width:8.75px;height:10.75px;background:rgb(253,238,229)"></div><div class="bk" style="left:48.00px;top:677.50px;width:8.75px;height:10.75px;background:rgb(252,229,216)"></div><div class="bk" style="left:56.50px;top:677.50px;width:8.75px;height:10.75px;background:rgb(252,229,216)"></div><div class="bk" style="left:65.00px;top:677.50px;width:8.75px;height:10.75px;background:rgb(250,212,190)"></div><div class="bk" style="left:73.50px;top:677.50px;width:8.75px;height:10.75px;background:rgb(254,246,242)"></div>
<div class="bk" style="left:437.30px;top:669.00px;width:9.25px;height:8.75px;background:rgb(210,210,212)"></div><div class="bk" style="left:446.30px;top:669.00px;width:9.25px;height:8.75px;background:rgb(201,201,203)"></div><div class="bk" style="left:455.30px;top:669.00px;width:9.25px;height:8.75px;background:rgb(201,201,203)"></div><div class="bk" style="left:464.30px;top:669.00px;width:9.25px;height:8.75px;background:rgb(192,192,194)"></div><div class="bk" style="left:482.30px;top:669.00px;width:9.25px;height:8.75px;background:rgb(201,201,203)"></div><div class="bk" style="left:491.30px;top:669.00px;width:9.25px;height:8.75px;background:rgb(183,183,185)"></div><div class="bk" style="left:509.30px;top:669.00px;width:9.25px;height:8.75px;background:rgb(183,183,185)"></div><div class="bk" style="left:518.30px;top:669.00px;width:9.25px;height:8.75px;background:rgb(201,201,203)"></div><div class="bk" style="left:527.30px;top:669.00px;width:9.25px;height:8.75px;background:rgb(201,201,203)"></div><div class="bk" style="left:536.30px;top:669.00px;width:9.25px;height:8.75px;background:rgb(210,210,212)"></div><div class="bk" style="left:545.30px;top:669.00px;width:9.25px;height:8.75px;background:rgb(237,237,239)"></div><div class="bk" style="left:554.30px;top:669.00px;width:9.25px;height:8.75px;background:rgb(210,210,212)"></div><div class="bk" style="left:563.30px;top:669.00px;width:9.25px;height:8.75px;background:rgb(183,183,185)"></div><div class="bk" style="left:572.30px;top:669.00px;width:9.25px;height:8.75px;background:rgb(201,201,203)"></div><div class="bk" style="left:581.30px;top:669.00px;width:9.25px;height:8.75px;background:rgb(219,219,221)"></div><div class="bk" style="left:590.30px;top:669.00px;width:9.25px;height:8.75px;background:rgb(219,219,221)"></div><div class="bk" style="left:599.30px;top:669.00px;width:9.25px;height:8.75px;background:rgb(201,201,203)"></div><div class="bk" style="left:608.30px;top:669.00px;width:9.25px;height:8.75px;background:rgb(237,237,239)"></div><div class="bk" style="left:437.30px;top:677.50px;width:9.25px;height:8.75px;background:rgb(228,228,230)"></div><div class="bk" style="left:446.30px;top:677.50px;width:9.25px;height:8.75px;background:rgb(228,228,230)"></div><div class="bk" style="left:455.30px;top:677.50px;width:9.25px;height:8.75px;background:rgb(210,210,212)"></div><div class="bk" style="left:464.30px;top:677.50px;width:9.25px;height:8.75px;background:rgb(228,228,230)"></div><div class="bk" style="left:473.30px;top:677.50px;width:9.25px;height:8.75px;background:rgb(246,246,248)"></div><div class="bk" style="left:482.30px;top:677.50px;width:9.25px;height:8.75px;background:rgb(228,228,230)"></div><div class="bk" style="left:491.30px;top:677.50px;width:9.25px;height:8.75px;background:rgb(237,237,239)"></div><div class="bk" style="left:500.30px;top:677.50px;width:9.25px;height:8.75px;background:rgb(246,246,248)"></div><div class="bk" style="left:509.30px;top:677.50px;width:9.25px;height:8.75px;background:rgb(219,219,221)"></div><div class="bk" style="left:518.30px;top:677.50px;width:9.25px;height:8.75px;background:rgb(219,219,221)"></div><div class="bk" style="left:527.30px;top:677.50px;width:9.25px;height:8.75px;background:rgb(219,219,221)"></div><div class="bk" style="left:536.30px;top:677.50px;width:9.25px;height:8.75px;background:rgb(219,219,221)"></div><div class="bk" style="left:545.30px;top:677.50px;width:9.25px;height:8.75px;background:rgb(237,237,239)"></div><div class="bk" style="left:554.30px;top:677.50px;width:9.25px;height:8.75px;background:rgb(228,228,230)"></div><div class="bk" style="left:581.30px;top:677.50px;width:9.25px;height:8.75px;background:rgb(219,219,221)"></div><div class="bk" style="left:590.30px;top:677.50px;width:9.25px;height:8.75px;background:rgb(228,228,230)"></div><div class="bk" style="left:599.30px;top:677.50px;width:9.25px;height:8.75px;background:rgb(237,237,239)"></div><div class="bk" style="left:608.30px;top:677.50px;width:9.25px;height:8.75px;background:rgb(237,237,239)"></div>
<div class="btn" style="top:661px">See details</div>
<div class="hl" style="top:714px"></div>
<div class="em" style="left:126px;top:727px;width:234px;height:20px"></div>
<div class="bk" style="left:15.00px;top:726.00px;width:8.68px;height:7.92px;background:rgb(253,238,229)"></div><div class="bk" style="left:23.43px;top:726.00px;width:8.68px;height:7.92px;background:rgb(253,238,229)"></div><div class="bk" style="left:31.86px;top:726.00px;width:8.68px;height:7.92px;background:rgb(254,246,242)"></div><div class="bk" style="left:40.29px;top:726.00px;width:8.68px;height:7.92px;background:rgb(254,246,242)"></div><div class="bk" style="left:57.14px;top:726.00px;width:8.68px;height:7.92px;background:rgb(253,238,229)"></div><div class="bk" style="left:65.57px;top:726.00px;width:8.68px;height:7.92px;background:rgb(254,246,242)"></div><div class="bk" style="left:15.00px;top:733.67px;width:8.68px;height:7.92px;background:rgb(250,212,190)"></div><div class="bk" style="left:23.43px;top:733.67px;width:8.68px;height:7.92px;background:rgb(252,229,216)"></div><div class="bk" style="left:31.86px;top:733.67px;width:8.68px;height:7.92px;background:rgb(249,204,177)"></div><div class="bk" style="left:40.29px;top:733.67px;width:8.68px;height:7.92px;background:rgb(248,195,164)"></div><div class="bk" style="left:48.71px;top:733.67px;width:8.68px;height:7.92px;background:rgb(249,204,177)"></div><div class="bk" style="left:57.14px;top:733.67px;width:8.68px;height:7.92px;background:rgb(250,212,190)"></div><div class="bk" style="left:65.57px;top:733.67px;width:8.68px;height:7.92px;background:rgb(249,204,177)"></div><div class="bk" style="left:15.00px;top:741.33px;width:8.68px;height:7.92px;background:rgb(254,246,242)"></div><div class="bk" style="left:23.43px;top:741.33px;width:8.68px;height:7.92px;background:rgb(254,246,242)"></div><div class="bk" style="left:31.86px;top:741.33px;width:8.68px;height:7.92px;background:rgb(254,246,242)"></div><div class="bk" style="left:40.29px;top:741.33px;width:8.68px;height:7.92px;background:rgb(254,246,242)"></div><div class="bk" style="left:48.71px;top:741.33px;width:8.68px;height:7.92px;background:rgb(254,246,242)"></div><div class="bk" style="left:57.14px;top:741.33px;width:8.68px;height:7.92px;background:rgb(254,246,242)"></div><div class="bk" style="left:65.57px;top:741.33px;width:8.68px;height:7.92px;background:rgb(254,246,242)"></div>
<div class="bk" style="left:437.20px;top:725.00px;width:9.25px;height:9.25px;background:rgb(219,219,221)"></div><div class="bk" style="left:446.20px;top:725.00px;width:9.25px;height:9.25px;background:rgb(246,246,248)"></div><div class="bk" style="left:455.20px;top:725.00px;width:9.25px;height:9.25px;background:rgb(237,237,239)"></div><div class="bk" style="left:464.20px;top:725.00px;width:9.25px;height:9.25px;background:rgb(237,237,239)"></div><div class="bk" style="left:473.20px;top:725.00px;width:9.25px;height:9.25px;background:rgb(246,246,248)"></div><div class="bk" style="left:482.20px;top:725.00px;width:9.25px;height:9.25px;background:rgb(219,219,221)"></div><div class="bk" style="left:491.20px;top:725.00px;width:9.25px;height:9.25px;background:rgb(237,237,239)"></div><div class="bk" style="left:500.20px;top:725.00px;width:9.25px;height:9.25px;background:rgb(246,246,248)"></div><div class="bk" style="left:509.20px;top:725.00px;width:9.25px;height:9.25px;background:rgb(219,219,221)"></div><div class="bk" style="left:518.20px;top:725.00px;width:9.25px;height:9.25px;background:rgb(219,219,221)"></div><div class="bk" style="left:527.20px;top:725.00px;width:9.25px;height:9.25px;background:rgb(219,219,221)"></div><div class="bk" style="left:545.20px;top:725.00px;width:9.25px;height:9.25px;background:rgb(219,219,221)"></div><div class="bk" style="left:554.20px;top:725.00px;width:9.25px;height:9.25px;background:rgb(219,219,221)"></div><div class="bk" style="left:563.20px;top:725.00px;width:9.25px;height:9.25px;background:rgb(219,219,221)"></div><div class="bk" style="left:572.20px;top:725.00px;width:9.25px;height:9.25px;background:rgb(219,219,221)"></div><div class="bk" style="left:590.20px;top:725.00px;width:9.25px;height:9.25px;background:rgb(237,237,239)"></div><div class="bk" style="left:599.20px;top:725.00px;width:9.25px;height:9.25px;background:rgb(237,237,239)"></div><div class="bk" style="left:608.20px;top:725.00px;width:9.25px;height:9.25px;background:rgb(237,237,239)"></div><div class="bk" style="left:437.20px;top:734.00px;width:9.25px;height:9.25px;background:rgb(201,201,203)"></div><div class="bk" style="left:446.20px;top:734.00px;width:9.25px;height:9.25px;background:rgb(183,183,185)"></div><div class="bk" style="left:455.20px;top:734.00px;width:9.25px;height:9.25px;background:rgb(174,174,176)"></div><div class="bk" style="left:464.20px;top:734.00px;width:9.25px;height:9.25px;background:rgb(210,210,212)"></div><div class="bk" style="left:473.20px;top:734.00px;width:9.25px;height:9.25px;background:rgb(228,228,230)"></div><div class="bk" style="left:482.20px;top:734.00px;width:9.25px;height:9.25px;background:rgb(201,201,203)"></div><div class="bk" style="left:491.20px;top:734.00px;width:9.25px;height:9.25px;background:rgb(210,210,212)"></div><div class="bk" style="left:500.20px;top:734.00px;width:9.25px;height:9.25px;background:rgb(219,219,221)"></div><div class="bk" style="left:509.20px;top:734.00px;width:9.25px;height:9.25px;background:rgb(201,201,203)"></div><div class="bk" style="left:518.20px;top:734.00px;width:9.25px;height:9.25px;background:rgb(183,183,185)"></div><div class="bk" style="left:527.20px;top:734.00px;width:9.25px;height:9.25px;background:rgb(201,201,203)"></div><div class="bk" style="left:536.20px;top:734.00px;width:9.25px;height:9.25px;background:rgb(237,237,239)"></div><div class="bk" style="left:545.20px;top:734.00px;width:9.25px;height:9.25px;background:rgb(219,219,221)"></div><div class="bk" style="left:554.20px;top:734.00px;width:9.25px;height:9.25px;background:rgb(219,219,221)"></div><div class="bk" style="left:563.20px;top:734.00px;width:9.25px;height:9.25px;background:rgb(219,219,221)"></div><div class="bk" style="left:572.20px;top:734.00px;width:9.25px;height:9.25px;background:rgb(210,210,212)"></div><div class="bk" style="left:581.20px;top:734.00px;width:9.25px;height:9.25px;background:rgb(201,201,203)"></div><div class="bk" style="left:590.20px;top:734.00px;width:9.25px;height:9.25px;background:rgb(237,237,239)"></div><div class="bk" style="left:599.20px;top:734.00px;width:9.25px;height:9.25px;background:rgb(183,183,185)"></div><div class="bk" style="left:608.20px;top:734.00px;width:9.25px;height:9.25px;background:rgb(192,192,194)"></div>
<div class="btn" style="top:723px">See details</div>
<div class="hl" style="top:775px"></div>
<div class="em" style="left:130px;top:791px;width:144px;height:18px"></div>
<div class="bk" style="left:17.00px;top:789.00px;width:9.25px;height:9.25px;background:rgb(251,221,203)"></div><div class="bk" style="left:26.00px;top:789.00px;width:9.25px;height:9.25px;background:rgb(251,221,203)"></div><div class="bk" style="left:35.00px;top:789.00px;width:9.25px;height:9.25px;background:rgb(251,221,203)"></div><div class="bk" style="left:44.00px;top:789.00px;width:9.25px;height:9.25px;background:rgb(253,238,229)"></div><div class="bk" style="left:53.00px;top:789.00px;width:9.25px;height:9.25px;background:rgb(252,229,216)"></div><div class="bk" style="left:62.00px;top:789.00px;width:9.25px;height:9.25px;background:rgb(251,221,203)"></div><div class="bk" style="left:71.00px;top:789.00px;width:9.25px;height:9.25px;background:rgb(252,229,216)"></div><div class="bk" style="left:80.00px;top:789.00px;width:9.25px;height:9.25px;background:rgb(252,229,216)"></div><div class="bk" style="left:89.00px;top:789.00px;width:9.25px;height:9.25px;background:rgb(253,238,229)"></div><div class="bk" style="left:98.00px;top:789.00px;width:9.25px;height:9.25px;background:rgb(252,229,216)"></div><div class="bk" style="left:17.00px;top:798.00px;width:9.25px;height:9.25px;background:rgb(252,229,216)"></div><div class="bk" style="left:26.00px;top:798.00px;width:9.25px;height:9.25px;background:rgb(251,221,203)"></div><div class="bk" style="left:35.00px;top:798.00px;width:9.25px;height:9.25px;background:rgb(252,229,216)"></div><div class="bk" style="left:44.00px;top:798.00px;width:9.25px;height:9.25px;background:rgb(253,238,229)"></div><div class="bk" style="left:53.00px;top:798.00px;width:9.25px;height:9.25px;background:rgb(251,221,203)"></div><div class="bk" style="left:62.00px;top:798.00px;width:9.25px;height:9.25px;background:rgb(251,221,203)"></div><div class="bk" style="left:71.00px;top:798.00px;width:9.25px;height:9.25px;background:rgb(252,229,216)"></div><div class="bk" style="left:80.00px;top:798.00px;width:9.25px;height:9.25px;background:rgb(252,229,216)"></div><div class="bk" style="left:89.00px;top:798.00px;width:9.25px;height:9.25px;background:rgb(252,229,216)"></div><div class="bk" style="left:98.00px;top:798.00px;width:9.25px;height:9.25px;background:rgb(252,229,216)"></div>
<div class="bk" style="left:433.30px;top:791.00px;width:9.25px;height:9.25px;background:rgb(228,228,230)"></div><div class="bk" style="left:442.30px;top:791.00px;width:9.25px;height:9.25px;background:rgb(201,201,203)"></div><div class="bk" style="left:451.30px;top:791.00px;width:9.25px;height:9.25px;background:rgb(201,201,203)"></div><div class="bk" style="left:460.30px;top:791.00px;width:9.25px;height:9.25px;background:rgb(192,192,194)"></div><div class="bk" style="left:478.30px;top:791.00px;width:9.25px;height:9.25px;background:rgb(201,201,203)"></div><div class="bk" style="left:487.30px;top:791.00px;width:9.25px;height:9.25px;background:rgb(201,201,203)"></div><div class="bk" style="left:505.30px;top:791.00px;width:9.25px;height:9.25px;background:rgb(183,183,185)"></div><div class="bk" style="left:514.30px;top:791.00px;width:9.25px;height:9.25px;background:rgb(210,210,212)"></div><div class="bk" style="left:523.30px;top:791.00px;width:9.25px;height:9.25px;background:rgb(210,210,212)"></div><div class="bk" style="left:532.30px;top:791.00px;width:9.25px;height:9.25px;background:rgb(210,210,212)"></div><div class="bk" style="left:541.30px;top:791.00px;width:9.25px;height:9.25px;background:rgb(246,246,248)"></div><div class="bk" style="left:550.30px;top:791.00px;width:9.25px;height:9.25px;background:rgb(210,210,212)"></div><div class="bk" style="left:559.30px;top:791.00px;width:9.25px;height:9.25px;background:rgb(210,210,212)"></div><div class="bk" style="left:568.30px;top:791.00px;width:9.25px;height:9.25px;background:rgb(183,183,185)"></div><div class="bk" style="left:577.30px;top:791.00px;width:9.25px;height:9.25px;background:rgb(210,210,212)"></div><div class="bk" style="left:586.30px;top:791.00px;width:9.25px;height:9.25px;background:rgb(210,210,212)"></div><div class="bk" style="left:595.30px;top:791.00px;width:9.25px;height:9.25px;background:rgb(228,228,230)"></div><div class="bk" style="left:604.30px;top:791.00px;width:9.25px;height:9.25px;background:rgb(201,201,203)"></div><div class="bk" style="left:433.30px;top:800.00px;width:9.25px;height:9.25px;background:rgb(237,237,239)"></div><div class="bk" style="left:442.30px;top:800.00px;width:9.25px;height:9.25px;background:rgb(219,219,221)"></div><div class="bk" style="left:451.30px;top:800.00px;width:9.25px;height:9.25px;background:rgb(210,210,212)"></div><div class="bk" style="left:460.30px;top:800.00px;width:9.25px;height:9.25px;background:rgb(219,219,221)"></div><div class="bk" style="left:469.30px;top:800.00px;width:9.25px;height:9.25px;background:rgb(237,237,239)"></div><div class="bk" style="left:478.30px;top:800.00px;width:9.25px;height:9.25px;background:rgb(219,219,221)"></div><div class="bk" style="left:487.30px;top:800.00px;width:9.25px;height:9.25px;background:rgb(228,228,230)"></div><div class="bk" style="left:496.30px;top:800.00px;width:9.25px;height:9.25px;background:rgb(237,237,239)"></div><div class="bk" style="left:505.30px;top:800.00px;width:9.25px;height:9.25px;background:rgb(219,219,221)"></div><div class="bk" style="left:514.30px;top:800.00px;width:9.25px;height:9.25px;background:rgb(219,219,221)"></div><div class="bk" style="left:523.30px;top:800.00px;width:9.25px;height:9.25px;background:rgb(228,228,230)"></div><div class="bk" style="left:532.30px;top:800.00px;width:9.25px;height:9.25px;background:rgb(219,219,221)"></div><div class="bk" style="left:550.30px;top:800.00px;width:9.25px;height:9.25px;background:rgb(237,237,239)"></div><div class="bk" style="left:559.30px;top:800.00px;width:9.25px;height:9.25px;background:rgb(237,237,239)"></div><div class="bk" style="left:568.30px;top:800.00px;width:9.25px;height:9.25px;background:rgb(237,237,239)"></div><div class="bk" style="left:577.30px;top:800.00px;width:9.25px;height:9.25px;background:rgb(228,228,230)"></div><div class="bk" style="left:586.30px;top:800.00px;width:9.25px;height:9.25px;background:rgb(237,237,239)"></div><div class="bk" style="left:595.30px;top:800.00px;width:9.25px;height:9.25px;background:rgb(228,228,230)"></div><div class="bk" style="left:604.30px;top:800.00px;width:9.25px;height:9.25px;background:rgb(237,237,239)"></div><div class="bk" style="left:613.30px;top:800.00px;width:9.25px;height:9.25px;background:rgb(246,246,248)"></div>
<div class="btn" style="top:784px">See details</div>
<div class="hl" style="top:837px"></div>
<div class="em" style="left:130px;top:850px;width:269px;height:22px"></div>
<div class="bk" style="left:18.00px;top:849.00px;width:9.25px;height:7.75px;background:rgb(253,238,229)"></div><div class="bk" style="left:36.00px;top:849.00px;width:9.25px;height:7.75px;background:rgb(254,246,242)"></div><div class="bk" style="left:45.00px;top:849.00px;width:9.25px;height:7.75px;background:rgb(254,246,242)"></div><div class="bk" style="left:18.00px;top:856.50px;width:9.25px;height:7.75px;background:rgb(250,212,190)"></div><div class="bk" style="left:27.00px;top:856.50px;width:9.25px;height:7.75px;background:rgb(249,204,177)"></div><div class="bk" style="left:36.00px;top:856.50px;width:9.25px;height:7.75px;background:rgb(249,204,177)"></div><div class="bk" style="left:45.00px;top:856.50px;width:9.25px;height:7.75px;background:rgb(253,238,229)"></div>
<div class="bk" style="left:440.00px;top:852.00px;width:9.25px;height:7.75px;background:rgb(201,201,203)"></div><div class="bk" style="left:449.00px;top:852.00px;width:9.25px;height:7.75px;background:rgb(201,201,203)"></div><div class="bk" style="left:458.00px;top:852.00px;width:9.25px;height:7.75px;background:rgb(210,210,212)"></div><div class="bk" style="left:467.00px;top:852.00px;width:9.25px;height:7.75px;background:rgb(228,228,230)"></div><div class="bk" style="left:476.00px;top:852.00px;width:9.25px;height:7.75px;background:rgb(219,219,221)"></div><div class="bk" style="left:485.00px;top:852.00px;width:9.25px;height:7.75px;background:rgb(210,210,212)"></div><div class="bk" style="left:494.00px;top:852.00px;width:9.25px;height:7.75px;background:rgb(246,246,248)"></div><div class="bk" style="left:503.00px;top:852.00px;width:9.25px;height:7.75px;background:rgb(210,210,212)"></div><div class="bk" style="left:512.00px;top:852.00px;width:9.25px;height:7.75px;background:rgb(183,183,185)"></div><div class="bk" style="left:521.00px;top:852.00px;width:9.25px;height:7.75px;background:rgb(210,210,212)"></div><div class="bk" style="left:530.00px;top:852.00px;width:9.25px;height:7.75px;background:rgb(210,210,212)"></div><div class="bk" style="left:539.00px;top:852.00px;width:9.25px;height:7.75px;background:rgb(237,237,239)"></div><div class="bk" style="left:548.00px;top:852.00px;width:9.25px;height:7.75px;background:rgb(192,192,194)"></div><div class="bk" style="left:557.00px;top:852.00px;width:9.25px;height:7.75px;background:rgb(210,210,212)"></div><div class="bk" style="left:566.00px;top:852.00px;width:9.25px;height:7.75px;background:rgb(192,192,194)"></div><div class="bk" style="left:575.00px;top:852.00px;width:9.25px;height:7.75px;background:rgb(228,228,230)"></div><div class="bk" style="left:584.00px;top:852.00px;width:9.25px;height:7.75px;background:rgb(219,219,221)"></div><div class="bk" style="left:593.00px;top:852.00px;width:9.25px;height:7.75px;background:rgb(201,201,203)"></div><div class="bk" style="left:602.00px;top:852.00px;width:9.25px;height:7.75px;background:rgb(228,228,230)"></div><div class="bk" style="left:440.00px;top:859.50px;width:9.25px;height:7.75px;background:rgb(219,219,221)"></div><div class="bk" style="left:449.00px;top:859.50px;width:9.25px;height:7.75px;background:rgb(201,201,203)"></div><div class="bk" style="left:458.00px;top:859.50px;width:9.25px;height:7.75px;background:rgb(210,210,212)"></div><div class="bk" style="left:467.00px;top:859.50px;width:9.25px;height:7.75px;background:rgb(219,219,221)"></div><div class="bk" style="left:476.00px;top:859.50px;width:9.25px;height:7.75px;background:rgb(219,219,221)"></div><div class="bk" style="left:485.00px;top:859.50px;width:9.25px;height:7.75px;background:rgb(219,219,221)"></div><div class="bk" style="left:494.00px;top:859.50px;width:9.25px;height:7.75px;background:rgb(237,237,239)"></div><div class="bk" style="left:503.00px;top:859.50px;width:9.25px;height:7.75px;background:rgb(219,219,221)"></div><div class="bk" style="left:512.00px;top:859.50px;width:9.25px;height:7.75px;background:rgb(219,219,221)"></div><div class="bk" style="left:521.00px;top:859.50px;width:9.25px;height:7.75px;background:rgb(219,219,221)"></div><div class="bk" style="left:530.00px;top:859.50px;width:9.25px;height:7.75px;background:rgb(210,210,212)"></div><div class="bk" style="left:539.00px;top:859.50px;width:9.25px;height:7.75px;background:rgb(237,237,239)"></div><div class="bk" style="left:548.00px;top:859.50px;width:9.25px;height:7.75px;background:rgb(219,219,221)"></div><div class="bk" style="left:557.00px;top:859.50px;width:9.25px;height:7.75px;background:rgb(219,219,221)"></div><div class="bk" style="left:566.00px;top:859.50px;width:9.25px;height:7.75px;background:rgb(219,219,221)"></div><div class="bk" style="left:575.00px;top:859.50px;width:9.25px;height:7.75px;background:rgb(237,237,239)"></div><div class="bk" style="left:584.00px;top:859.50px;width:9.25px;height:7.75px;background:rgb(210,210,212)"></div><div class="bk" style="left:593.00px;top:859.50px;width:9.25px;height:7.75px;background:rgb(228,228,230)"></div><div class="bk" style="left:602.00px;top:859.50px;width:9.25px;height:7.75px;background:rgb(228,228,230)"></div>
<div class="btn" style="top:846px">See details</div>
<div class="bk" style="left:18px;top:863px;width:9px;height:1px;background:#ff8a30"></div><div class="bk" style="left:27px;top:863px;width:18px;height:1px;background:#ffa060"></div><div class="bk" style="left:34px;top:864px;width:1px;height:4px;background:#ff6a00"></div>
<div class="bk" style="left:17px;top:371px;width:1px;height:1px;background:#ff9a40"></div><div class="bk" style="left:457px;top:375px;width:1px;height:1px;background:#334"></div><div class="bk" style="left:457px;top:867px;width:1px;height:1px;background:#334"></div><div class="bk" style="left:203px;top:81px;width:1px;height:2px;background:#ff6a10"></div><svg style="position:absolute;left:0;top:0" width="1314" height="892"><g transform="translate(651.60 234.90)"><circle cx="8" cy="8" r="7.8" fill="#0dcaf0"/><path d="M6.05 6.3A2.3 2.25 0 1 1 9.9 7.95C9.1 8.6 8.25 8.9 8.25 10.1" fill="none" stroke="#fff" stroke-width="2.1"/><rect x="7.05" y="11.1" width="2.2" height="1.9" fill="#fff"/></g><g transform="translate(825.60 234.90)"><circle cx="8" cy="8" r="7.8" fill="#198754"/><path d="M4.0 8.0l2.9 2.6 4.6-4.7" fill="none" stroke="#fff" stroke-width="1.8"/></g><g transform="translate(968.20 234.90)"><circle cx="8" cy="8" r="7.8" fill="#0dcaf0"/><path d="M6.05 6.3A2.3 2.25 0 1 1 9.9 7.95C9.1 8.6 8.25 8.9 8.25 10.1" fill="none" stroke="#fff" stroke-width="2.1"/><rect x="7.05" y="11.1" width="2.2" height="1.9" fill="#fff"/></g><g transform="translate(651.60 296.40)"><circle cx="8" cy="8" r="7.8" fill="#0dcaf0"/><path d="M6.05 6.3A2.3 2.25 0 1 1 9.9 7.95C9.1 8.6 8.25 8.9 8.25 10.1" fill="none" stroke="#fff" stroke-width="2.1"/><rect x="7.05" y="11.1" width="2.2" height="1.9" fill="#fff"/></g><g transform="translate(825.60 296.40)"><circle cx="8" cy="8" r="7.8" fill="#198754"/><path d="M4.0 8.0l2.9 2.6 4.6-4.7" fill="none" stroke="#fff" stroke-width="1.8"/></g><g transform="translate(968.20 296.40)"><circle cx="8" cy="8" r="7.8" fill="#0dcaf0"/><path d="M6.05 6.3A2.3 2.25 0 1 1 9.9 7.95C9.1 8.6 8.25 8.9 8.25 10.1" fill="none" stroke="#fff" stroke-width="2.1"/><rect x="7.05" y="11.1" width="2.2" height="1.9" fill="#fff"/></g><g transform="translate(651.60 357.90)"><circle cx="8" cy="8" r="7.8" fill="#0dcaf0"/><path d="M6.05 6.3A2.3 2.25 0 1 1 9.9 7.95C9.1 8.6 8.25 8.9 8.25 10.1" fill="none" stroke="#fff" stroke-width="2.1"/><rect x="7.05" y="11.1" width="2.2" height="1.9" fill="#fff"/></g><g transform="translate(825.60 357.90)"><circle cx="8" cy="8" r="7.8" fill="#198754"/><path d="M4.0 8.0l2.9 2.6 4.6-4.7" fill="none" stroke="#fff" stroke-width="1.8"/></g><g transform="translate(968.20 357.90)"><circle cx="8" cy="8" r="7.8" fill="#0dcaf0"/><path d="M6.05 6.3A2.3 2.25 0 1 1 9.9 7.95C9.1 8.6 8.25 8.9 8.25 10.1" fill="none" stroke="#fff" stroke-width="2.1"/><rect x="7.05" y="11.1" width="2.2" height="1.9" fill="#fff"/></g><g transform="translate(651.60 419.40)"><circle cx="8" cy="8" r="7.8" fill="#0dcaf0"/><path d="M6.05 6.3A2.3 2.25 0 1 1 9.9 7.95C9.1 8.6 8.25 8.9 8.25 10.1" fill="none" stroke="#fff" stroke-width="2.1"/><rect x="7.05" y="11.1" width="2.2" height="1.9" fill="#fff"/></g><g transform="translate(825.60 419.40)"><circle cx="8" cy="8" r="7.8" fill="#198754"/><path d="M4.0 8.0l2.9 2.6 4.6-4.7" fill="none" stroke="#fff" stroke-width="1.8"/></g><g transform="translate(968.20 419.40)"><circle cx="8" cy="8" r="7.8" fill="#0dcaf0"/><path d="M6.05 6.3A2.3 2.25 0 1 1 9.9 7.95C9.1 8.6 8.25 8.9 8.25 10.1" fill="none" stroke="#fff" stroke-width="2.1"/><rect x="7.05" y="11.1" width="2.2" height="1.9" fill="#fff"/></g><g transform="translate(651.20 480.90)"><circle cx="8" cy="8" r="6.85" fill="none" stroke="#ffc107" stroke-width="1.9"/><path d="M3.3 3.3l9.4 9.4" stroke="#ffc107" stroke-width="1.9"/></g><g transform="translate(825.60 480.90)"><circle cx="8" cy="8" r="7.8" fill="#198754"/><path d="M4.0 8.0l2.9 2.6 4.6-4.7" fill="none" stroke="#fff" stroke-width="1.8"/></g><g transform="translate(968.20 480.90)"><circle cx="8" cy="8" r="7.8" fill="#dc3545"/><path d="M4.8 4.8l6.4 6.4M11.2 4.8l-6.4 6.4" stroke="#fff" stroke-width="2.1"/></g><g transform="translate(651.60 542.40)"><circle cx="8" cy="8" r="7.8" fill="#0dcaf0"/><path d="M6.05 6.3A2.3 2.25 0 1 1 9.9 7.95C9.1 8.6 8.25 8.9 8.25 10.1" fill="none" stroke="#fff" stroke-width="2.1"/><rect x="7.05" y="11.1" width="2.2" height="1.9" fill="#fff"/></g><g transform="translate(825.60 542.40)"><circle cx="8" cy="8" r="7.8" fill="#198754"/><path d="M4.0 8.0l2.9 2.6 4.6-4.7" fill="none" stroke="#fff" stroke-width="1.8"/></g><g transform="translate(968.20 542.40)"><circle cx="8" cy="8" r="7.8" fill="#0dcaf0"/><path d="M6.05 6.3A2.3 2.25 0 1 1 9.9 7.95C9.1 8.6 8.25 8.9 8.25 10.1" fill="none" stroke="#fff" stroke-width="2.1"/><rect x="7.05" y="11.1" width="2.2" height="1.9" fill="#fff"/></g><g transform="translate(651.60 603.90)"><circle cx="8" cy="8" r="7.8" fill="#0dcaf0"/><path d="M6.05 6.3A2.3 2.25 0 1 1 9.9 7.95C9.1 8.6 8.25 8.9 8.25 10.1" fill="none" stroke="#fff" stroke-width="2.1"/><rect x="7.05" y="11.1" width="2.2" height="1.9" fill="#fff"/></g><g transform="translate(825.60 603.90)"><circle cx="8" cy="8" r="7.8" fill="#198754"/><path d="M4.0 8.0l2.9 2.6 4.6-4.7" fill="none" stroke="#fff" stroke-width="1.8"/></g><g transform="translate(968.20 603.90)"><circle cx="8" cy="8" r="7.8" fill="#0dcaf0"/><path d="M6.05 6.3A2.3 2.25 0 1 1 9.9 7.95C9.1 8.6 8.25 8.9 8.25 10.1" fill="none" stroke="#fff" stroke-width="2.1"/><rect x="7.05" y="11.1" width="2.2" height="1.9" fill="#fff"/></g><g transform="translate(651.60 665.40)"><circle cx="8" cy="8" r="7.8" fill="#0dcaf0"/><path d="M6.05 6.3A2.3 2.25 0 1 1 9.9 7.95C9.1 8.6 8.25 8.9 8.25 10.1" fill="none" stroke="#fff" stroke-width="2.1"/><rect x="7.05" y="11.1" width="2.2" height="1.9" fill="#fff"/></g><g transform="translate(825.60 665.40)"><circle cx="8" cy="8" r="7.8" fill="#198754"/><path d="M4.0 8.0l2.9 2.6 4.6-4.7" fill="none" stroke="#fff" stroke-width="1.8"/></g><g transform="translate(968.20 665.40)"><circle cx="8" cy="8" r="7.8" fill="#0dcaf0"/><path d="M6.05 6.3A2.3 2.25 0 1 1 9.9 7.95C9.1 8.6 8.25 8.9 8.25 10.1" fill="none" stroke="#fff" stroke-width="2.1"/><rect x="7.05" y="11.1" width="2.2" height="1.9" fill="#fff"/></g><g transform="translate(651.60 726.90)"><circle cx="8" cy="8" r="7.8" fill="#0dcaf0"/><path d="M6.05 6.3A2.3 2.25 0 1 1 9.9 7.95C9.1 8.6 8.25 8.9 8.25 10.1" fill="none" stroke="#fff" stroke-width="2.1"/><rect x="7.05" y="11.1" width="2.2" height="1.9" fill="#fff"/></g><g transform="translate(825.60 726.90)"><circle cx="8" cy="8" r="7.8" fill="#0dcaf0"/><path d="M6.05 6.3A2.3 2.25 0 1 1 9.9 7.95C9.1 8.6 8.25 8.9 8.25 10.1" fill="none" stroke="#fff" stroke-width="2.1"/><rect x="7.05" y="11.1" width="2.2" height="1.9" fill="#fff"/></g><g transform="translate(968.20 726.90)"><circle cx="8" cy="8" r="7.8" fill="#ffc107"/><path d="M6.9 4.1h2.4l-.35 5.6h-1.7z" fill="#fff"/><rect x="7.0" y="10.3" width="2.1" height="1.8" fill="#fff"/></g><g transform="translate(651.60 788.40)"><circle cx="8" cy="8" r="7.8" fill="#198754"/><path d="M4.0 8.0l2.9 2.6 4.6-4.7" fill="none" stroke="#fff" stroke-width="1.8"/></g><g transform="translate(825.60 788.40)"><circle cx="8" cy="8" r="7.8" fill="#198754"/><path d="M4.0 8.0l2.9 2.6 4.6-4.7" fill="none" stroke="#fff" stroke-width="1.8"/></g><g transform="translate(968.20 788.40)"><circle cx="8" cy="8" r="7.8" fill="#198754"/><path d="M4.0 8.0l2.9 2.6 4.6-4.7" fill="none" stroke="#fff" stroke-width="1.8"/></g><g transform="translate(651.60 849.90)"><circle cx="8" cy="8" r="7.8" fill="#198754"/><path d="M4.0 8.0l2.9 2.6 4.6-4.7" fill="none" stroke="#fff" stroke-width="1.8"/></g><g transform="translate(825.60 849.90)"><circle cx="8" cy="8" r="7.8" fill="#198754"/><path d="M4.0 8.0l2.9 2.6 4.6-4.7" fill="none" stroke="#fff" stroke-width="1.8"/></g><g transform="translate(968.20 849.90)"><circle cx="8" cy="8" r="7.8" fill="#198754"/><path d="M4.0 8.0l2.9 2.6 4.6-4.7" fill="none" stroke="#fff" stroke-width="1.8"/></g></svg>
</body></html>
